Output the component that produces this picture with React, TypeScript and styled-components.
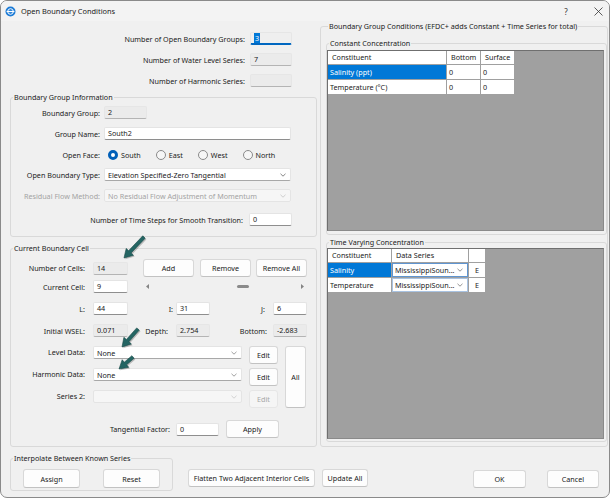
import React from 'react'
import styled, { createGlobalStyle, css } from 'styled-components'

const FONT = '"Noto Sans", "Open Sans", "Liberation Sans", sans-serif'

const GlobalStyle = createGlobalStyle`
  html, body {
    margin: 0;
    padding: 0;
    background: #ffffff;
  }
  body {
    font-family: ${FONT};
    font-size: 7.2px;
    color: #1a1a1a;
  }
  * {
    box-sizing: border-box;
  }
`

const Window = styled.div`
  position: relative;
  width: 610px;
  height: 498px;
  border: 1px solid #8a8a8a;
  border-radius: 7px;
  background: #f0f0f0;
  overflow: hidden;
  display: flex;
  flex-direction: column;
`

const TitleBar = styled.div`
  flex: 0 0 20px;
  display: flex;
  align-items: center;
  padding-left: 4px;
  background: #f3f3f3;
  font-size: 7.4px;
`

const TitleText = styled.span`
  margin-left: 5px;
`

const TitleButton = styled.span<{ $mr: number }>`
  width: 20px;
  display: flex;
  justify-content: center;
  align-items: center;
  margin-right: ${p => p.$mr}px;
  color: #333;
  font-size: 8px;
`

const Body = styled.div`
  flex: 1;
  display: flex;
  flex-direction: column;
  padding-left: 9px;
`

const Columns = styled.div`
  display: flex;
`

const LeftCol = styled.div`
  width: 307px;
  display: flex;
  flex-direction: column;
  padding-top: 11px;
`

const RightCol = styled.div`
  width: 288px;
  margin-left: 3px;
  display: flex;
`

const GroupBox = styled.fieldset<{ $mt?: number; $pad: string; $w?: number }>`
  margin: ${p => p.$mt ?? 0}px 0 0 0;
  padding: ${p => p.$pad};
  border: 1px solid #d9d9d9;
  border-radius: 3px;
  min-width: 0;
  ${p => p.$w && css`width: ${p.$w}px;`}
`

const Caption = styled.legend`
  margin-left: 2px;
  padding: 0 1px;
  line-height: 11px;
  white-space: nowrap;
`

const Row = styled.div<{ $h?: number; $mt?: number; $justify?: string; $pr?: number; $align?: string }>`
  display: flex;
  align-items: ${p => p.$align ?? 'center'};
  height: ${p => p.$h ?? 13}px;
  margin-top: ${p => p.$mt ?? 0}px;
  justify-content: ${p => p.$justify ?? 'flex-start'};
  padding-right: ${p => p.$pr ?? 0}px;
`

const Label = styled.span<{ $w?: number; $pr?: number; $disabled?: boolean }>`
  ${p => (p.$w ? css`flex: 0 0 ${p.$w}px;` : css`flex: none;`)}
  text-align: right;
  padding-right: ${p => p.$pr ?? 4}px;
  white-space: nowrap;
  color: ${p => (p.$disabled ? '#a3a3a3' : 'inherit')};
`

const Field = styled.div<{ $w: number; $variant?: 'normal' | 'readonly' | 'focused' }>`
  flex: 0 0 ${p => p.$w}px;
  height: 13px;
  padding: 0 3px;
  line-height: 11px;
  border: 1px solid #e4e4e4;
  border-bottom-color: #8e8e8e;
  border-radius: 2px;
  background: #ffffff;
  white-space: nowrap;
  overflow: hidden;
  ${p =>
    p.$variant === 'readonly' &&
    css`
      background: #ebebeb;
      border-color: #e6e6e6;
      border-bottom-color: #b4b4b4;
    `}
  ${p =>
    p.$variant === 'focused' &&
    css`
      background: #efefef;
      border-color: #e6e6e6;
      border-bottom: 2px solid #0067c0;
      line-height: 10px;
    `}
`

const Highlight = styled.span`
  background: #0078d7;
  color: #ffffff;
  padding: 0 1px;
`

const Select = styled.div<{ $w: number; $disabled?: boolean }>`
  flex: 0 0 ${p => p.$w}px;
  height: 13px;
  display: flex;
  align-items: center;
  justify-content: space-between;
  padding: 0 4px 0 3px;
  border: 1px solid #e4e4e4;
  border-bottom-color: ${p => (p.$disabled ? '#e4e4e4' : '#a8a8a8')};
  border-radius: 2px;
  background: ${p => (p.$disabled ? '#f6f6f6' : '#ffffff')};
  color: ${p => (p.$disabled ? '#a3a3a3' : 'inherit')};
  white-space: nowrap;
`

const Button = styled.button<{ $w: number; $h?: number; $ml?: number; $mt?: number }>`
  flex: 0 0 ${p => p.$w}px;
  width: ${p => p.$w}px;
  height: ${p => p.$h ?? 18}px;
  margin: ${p => p.$mt ?? 0}px 0 0 ${p => p.$ml ?? 0}px;
  padding: 0;
  font: inherit;
  color: #1a1a1a;
  background: #fdfdfd;
  border: 1px solid #d8d8d8;
  border-bottom-color: #c2c2c2;
  border-radius: 3px;
  white-space: nowrap;
  &:disabled {
    color: #a6a6a6;
    background: #f5f5f5;
    border-color: #e6e6e6;
  }
`

const RadioGroup = styled.div`
  display: flex;
  align-items: center;
  gap: 15px;
  margin-left: 4px;
`

const RadioItem = styled.span`
  display: flex;
  align-items: center;
  gap: 3px;
`

const RadioDot = styled.span<{ $on?: boolean }>`
  width: 10px;
  height: 10px;
  border-radius: 50%;
  ${p =>
    p.$on
      ? css`
          background: #ffffff;
          border: 3px solid #005fb8;
        `
      : css`
          background: #f6f6f6;
          border: 1px solid #8a8a8a;
        `}
`

const ScrollTrack = styled.div`
  flex: 0 0 164px;
  margin-left: 15px;
  display: flex;
  align-items: center;
  height: 13px;
  padding: 0 3px;
`

const ScrollLane = styled.div`
  flex: 1;
  margin: 0 4px;
  display: flex;
  align-items: center;
`

const ScrollThumb = styled.div`
  width: 12px;
  height: 3px;
  border-radius: 2px;
  background: #8a8a8a;
`

const CellBlock = styled.div`
  display: flex;
  margin-top: 9px;
`

const CellStack = styled.div`
  display: flex;
  flex-direction: column;
  gap: 4px;
`

const Panel = styled.div<{ $h: number }>`
  height: ${p => p.$h}px;
  background: #a0a0a0;
  border: 1px solid #6f6f6f;
  border-right-color: #8a8a8a;
  border-bottom-color: #8a8a8a;
`

const Grid = styled.div<{ $cols: string }>`
  display: inline-grid;
  grid-template-columns: ${p => p.$cols};
  grid-template-rows: 13px 14px 14px;
  gap: 1px;
  padding: 0 1px 1px 0;
  background: #a0a0a0;
  vertical-align: top;
`

const Cell = styled.div<{ $head?: boolean; $selected?: boolean; $center?: boolean }>`
  background: #ffffff;
  line-height: ${p => (p.$head ? 13 : 14)}px;
  padding-left: ${p => (p.$head ? 4 : 2)}px;
  white-space: nowrap;
  overflow: hidden;
  ${p =>
    p.$selected &&
    css`
      background: #0078d7;
      color: #ffffff;
    `}
  ${p =>
    p.$center &&
    css`
      padding-left: 0;
      text-align: center;
    `}
`

const ComboCell = styled.div<{ $active?: boolean }>`
  background: #ffffff;
  display: flex;
  align-items: center;
  justify-content: space-between;
  padding: 0 4px 0 2px;
  border: 1px solid ${p => (p.$active ? '#5f95d1' : '#a9c3e2')};
  white-space: nowrap;
`

const BottomRow = styled.div`
  display: flex;
  align-items: flex-start;
`

const Overlay = styled.svg`
  position: absolute;
  left: 0;
  top: 0;
  pointer-events: none;
`

const Chevron = ({ color = '#666' }: { color?: string }) => (
  <svg width="6" height="4" viewBox="0 0 6 4">
    <path d="M0.5 0.8 L3 3.2 L5.5 0.8" fill="none" stroke={color} strokeWidth="0.8" />
  </svg>
)

const Radio = ({ on, label }: { on?: boolean; label: string }) => (
  <RadioItem>
    <RadioDot $on={on} />
    {label}
  </RadioItem>
)

type Pt = [number, number]

function arrowPoints(tail: Pt, tip: Pt, shaft = 3.4, headLen = 8.5, headW = 10): string {
  const dx = tip[0] - tail[0]
  const dy = tip[1] - tail[1]
  const len = Math.hypot(dx, dy)
  const ux = dx / len
  const uy = dy / len
  const nx = -uy
  const ny = ux
  const bx = tip[0] - ux * headLen
  const by = tip[1] - uy * headLen
  const pts: Pt[] = [
    [tail[0] + (nx * shaft) / 2, tail[1] + (ny * shaft) / 2],
    [bx + (nx * shaft) / 2, by + (ny * shaft) / 2],
    [bx + (nx * headW) / 2, by + (ny * headW) / 2],
    tip,
    [bx - (nx * headW) / 2, by - (ny * headW) / 2],
    [bx - (nx * shaft) / 2, by - (ny * shaft) / 2],
    [tail[0] - (nx * shaft) / 2, tail[1] - (ny * shaft) / 2],
  ]
  return pts.map(p => p.map(v => v.toFixed(1)).join(',')).join(' ')
}

const arrows: { tail: Pt; tip: Pt }[] = [
  { tail: [143, 236], tip: [123, 257] },
  { tail: [137, 328], tip: [121, 346] },
  { tail: [132, 356], tip: [118, 368] },
]

const cellCount = 14
const currentCell = 9

export default function App() {
  const thumbShift = ((currentCell - 1) / (cellCount - 1)) * 136

  return (
    <>
      <GlobalStyle />
      <Window>
        <TitleBar>
          <svg width="11" height="11" viewBox="0 0 11 11">
            <circle cx="5.5" cy="5.5" r="5" fill="#1a7ad6" />
            <circle cx="5.5" cy="5.5" r="2.8" fill="none" stroke="#ffffff" strokeWidth="1" />
            <rect x="1.6" y="4.9" width="7.8" height="1.2" fill="#ffffff" />
          </svg>
          <TitleText>Open Boundary Conditions</TitleText>
          <TitleButton $mr={12} style={{ marginLeft: 'auto' }}>?</TitleButton>
          <TitleButton $mr={1}>
            <svg width="9" height="9" viewBox="0 0 9 9">
              <path d="M0.5 0.5 L8.5 8.5 M8.5 0.5 L0.5 8.5" stroke="#333" strokeWidth="0.8" />
            </svg>
          </TitleButton>
        </TitleBar>

        <Body>
          <Columns>
            <LeftCol>
              <Row>
                <Label $w={240} $pr={5}>Number of Open Boundary Groups:</Label>
                <Field $w={42} $variant="focused">
                  <Highlight>3</Highlight>
                </Field>
              </Row>
              <Row $mt={8}>
                <Label $w={240} $pr={5}>Number of Water Level Series:</Label>
                <Field $w={42} $variant="readonly">7</Field>
              </Row>
              <Row $mt={8}>
                <Label $w={240} $pr={5}>Number of Harmonic Series:</Label>
                <Field $w={42} $variant="readonly" />
              </Row>

              <GroupBox $mt={5} $pad="3px 0 10px 0">
                <Caption>Boundary Group Information</Caption>
                <Row>
                  <Label $w={93}>Boundary Group:</Label>
                  <Field $w={43} $variant="readonly">2</Field>
                </Row>
                <Row $mt={8}>
                  <Label $w={93}>Group Name:</Label>
                  <Field $w={187}>South2</Field>
                </Row>
                <Row $mt={8}>
                  <Label $w={93}>Open Face:</Label>
                  <RadioGroup>
                    <Radio on label="South" />
                    <Radio label="East" />
                    <Radio label="West" />
                    <Radio label="North" />
                  </RadioGroup>
                </Row>
                <Row $mt={7}>
                  <Label $w={93}>Open Boundary Type:</Label>
                  <Select $w={187}>
                    Elevation Specified-Zero Tangential
                    <Chevron />
                  </Select>
                </Row>
                <Row $mt={8}>
                  <Label $w={93} $disabled>Residual Flow Method:</Label>
                  <Select $w={187} $disabled>
                    No Residual Flow Adjustment of Momentum
                    <Chevron color="#c4c4c4" />
                  </Select>
                </Row>
                <Row $mt={11} $justify="flex-end" $pr={24}>
                  <Label $pr={6}>Number of Time Steps for Smooth Transition:</Label>
                  <Field $w={43}>0</Field>
                </Row>
              </GroupBox>

              <GroupBox $mt={6} $pad="5px 0 8px 0">
                <Caption>Current Boundary Cell</Caption>
                <Row $h={18}>
                  <Label $w={82} $pr={8}>Number of Cells:</Label>
                  <Field $w={35} $variant="readonly">{cellCount}</Field>
                  <Button $w={51} $ml={15}>Add</Button>
                  <Button $w={51} $ml={6}>Remove</Button>
                  <Button $w={51} $ml={5}>Remove All</Button>
                </Row>
                <Row $mt={3}>
                  <Label $w={82} $pr={8}>Current Cell:</Label>
                  <Field $w={35}>{currentCell}</Field>
                  <ScrollTrack>
                    <svg width="3" height="5" viewBox="0 0 3 5">
                      <path d="M3 0 L0 2.5 L3 5 Z" fill="#858585" />
                    </svg>
                    <ScrollLane>
                      <ScrollThumb style={{ marginLeft: thumbShift }} />
                    </ScrollLane>
                    <svg width="3" height="5" viewBox="0 0 3 5">
                      <path d="M0 0 L3 2.5 L0 5 Z" fill="#858585" />
                    </svg>
                  </ScrollTrack>
                </Row>
                <Row $mt={9}>
                  <Label $w={82} $pr={8}>L:</Label>
                  <Field $w={35}>44</Field>
                  <Label $w={48} $pr={3}>I:</Label>
                  <Field $w={34}>31</Field>
                  <Label $w={63} $pr={8}>J:</Label>
                  <Field $w={34}>6</Field>
                </Row>
                <Row $mt={9}>
                  <Label $w={82} $pr={8}>Initial WSEL:</Label>
                  <Field $w={35} $variant="readonly">0.071</Field>
                  <Label $w={48} $pr={8}>Depth:</Label>
                  <Field $w={34} $variant="readonly">2.754</Field>
                  <Label $w={63} $pr={6}>Bottom:</Label>
                  <Field $w={34} $variant="readonly">-2.683</Field>
                </Row>
                <CellBlock>
                  <CellStack>
                    <Row $h={18} $align="flex-start">
                      <Label $w={82} $pr={8} style={{ lineHeight: '13px' }}>Level Data:</Label>
                      <Select $w={149}>
                        None
                        <Chevron color="#888" />
                      </Select>
                      <Button $w={29} $ml={7}>Edit</Button>
                    </Row>
                    <Row $h={18} $align="flex-start">
                      <Label $w={82} $pr={8} style={{ lineHeight: '13px' }}>Harmonic Data:</Label>
                      <Select $w={149}>
                        None
                        <Chevron color="#888" />
                      </Select>
                      <Button $w={29} $ml={7}>Edit</Button>
                    </Row>
                    <Row $h={18} $align="flex-start">
                      <Label $w={82} $pr={8} style={{ lineHeight: '13px' }}>Series 2:</Label>
                      <Select $w={149} $disabled>
                        <span />
                        <Chevron color="#c8c8c8" />
                      </Select>
                      <Button $w={29} $ml={7} disabled>Edit</Button>
                    </Row>
                  </CellStack>
                  <Button $w={21} $h={62} $ml={7}>All</Button>
                </CellBlock>
                <Row $h={18} $mt={12}>
                  <Label $w={165} $pr={6}>Tangential Factor:</Label>
                  <Field $w={43}>0</Field>
                  <Button $w={53} $ml={7}>Apply</Button>
                </Row>
              </GroupBox>
            </LeftCol>

            <RightCol>
              <GroupBox $pad="0 0 2px 5px" style={{ flex: 1 }}>
                <Caption>Boundary Group Conditions (EFDC+ adds Constant + Time Series for total)</Caption>
                <GroupBox $mt={6} $pad="1px 2px 3px 0">
                  <Caption>Constant Concentration</Caption>
                  <Panel $h={181}>
                    <Grid $cols="118px 33px 33px">
                      <Cell $head>Constituent</Cell>
                      <Cell $head>Bottom</Cell>
                      <Cell $head>Surface</Cell>
                      <Cell $selected>Salinity (ppt)</Cell>
                      <Cell>0</Cell>
                      <Cell>0</Cell>
                      <Cell>Temperature (°C)</Cell>
                      <Cell>0</Cell>
                      <Cell>0</Cell>
                    </Grid>
                  </Panel>
                </GroupBox>
                <GroupBox $mt={2} $pad="0 2px 2px 0">
                  <Caption>Time Varying Concentration</Caption>
                  <Panel $h={191}>
                    <Grid $cols="63px 76px 16px">
                      <Cell $head>Constituent</Cell>
                      <Cell $head>Data Series</Cell>
                      <Cell $head />
                      <Cell $selected>Salinity</Cell>
                      <ComboCell $active>
                        MississippiSoun...
                        <Chevron color="#777" />
                      </ComboCell>
                      <Cell $center>E</Cell>
                      <Cell>Temperature</Cell>
                      <ComboCell>
                        MississippiSoun...
                        <Chevron color="#777" />
                      </ComboCell>
                      <Cell $center>E</Cell>
                    </Grid>
                  </Panel>
                </GroupBox>
              </GroupBox>
            </RightCol>
          </Columns>

          <BottomRow>
            <GroupBox $mt={6} $pad="5px 0 2px 0" $w={163}>
              <Caption>Interpolate Between Known Series</Caption>
              <Row $h={19}>
                <Button $w={57} $h={19} $ml={12}>Assign</Button>
                <Button $w={57} $h={19} $ml={23}>Reset</Button>
              </Row>
            </GroupBox>
            <Button $w={127} $ml={15} $mt={22}>Flatten Two Adjacent Interior Cells</Button>
            <Button $w={46} $ml={7} $mt={22}>Update All</Button>
            <Button $w={53} $ml={105} $mt={23}>OK</Button>
            <Button $w={52} $ml={21} $mt={23}>Cancel</Button>
          </BottomRow>
        </Body>

        <Overlay width="610" height="498" viewBox="0 0 610 498">
          {arrows.map((a, i) => (
            <g key={i}>
              <polygon
                points={arrowPoints([a.tail[0] + 1.2, a.tail[1] + 1.2], [a.tip[0] + 1.2, a.tip[1] + 1.2])}
                fill="rgba(0,0,0,0.22)"
              />
              <polygon points={arrowPoints(a.tail, a.tip)} fill="#246563" stroke="#184847" strokeWidth="0.6" />
            </g>
          ))}
        </Overlay>
      </Window>
    </>
  )
}
